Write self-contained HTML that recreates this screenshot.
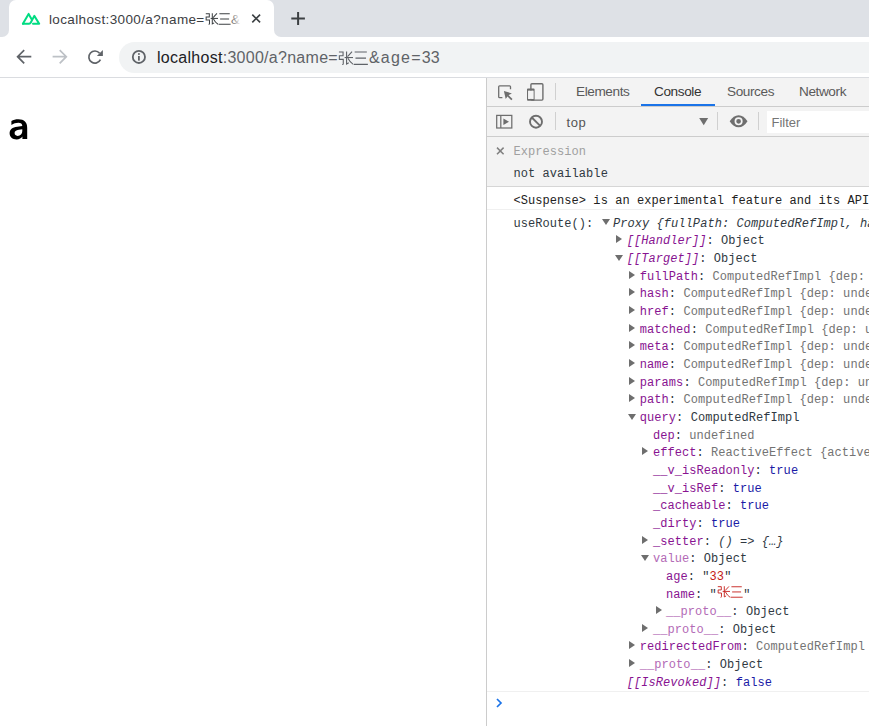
<!DOCTYPE html>
<html><head><meta charset="utf-8">
<style>
*{margin:0;padding:0;box-sizing:border-box}
html,body{width:869px;height:726px;overflow:hidden;background:#fff;position:relative;font-family:"Liberation Sans",sans-serif}
.abs{position:absolute}
#strip{left:0;top:0;width:869px;height:37px;background:#dee1e6}
#tab{left:9px;top:0;width:265px;height:37px;background:#fff;border-radius:7px 7px 0 0}
#flareL{left:0;top:0;width:9px;height:37px;background:#dee1e6;border-bottom-right-radius:7px}
#flareLbg{left:0;top:28px;width:9px;height:9px;background:#fff}
#flareR{left:274px;top:0;width:595px;height:37px;background:#dee1e6;border-bottom-left-radius:7px}
#flareRbg{left:274px;top:28px;width:9px;height:9px;background:#fff}
#tabtitle{left:49px;top:12px;font-size:13.5px;letter-spacing:0.37px;color:#3c4043;white-space:nowrap;width:192px;overflow:hidden}
#tabfade{left:229px;top:8px;width:13px;height:22px;background:linear-gradient(to right,rgba(255,255,255,0),#fff 90%)}
#toolbar{left:0;top:37px;width:869px;height:40px;background:#fff}
#omni{left:119px;top:42px;width:780px;height:31px;background:#f1f3f4;border-radius:15.5px}
#tline{left:0;top:77px;width:869px;height:1px;background:#dadce0}
#url{left:157px;top:49px;font-size:16px;letter-spacing:0.28px;color:#5f6368;white-space:nowrap}
#url b{font-weight:normal;color:#202124}
#dt{left:486px;top:78px;width:383px;height:648px;background:#fff;border-left:1px solid #cccccc}
#dtbar1{left:487px;top:78px;width:382px;height:29px;background:#f3f3f3;border-bottom:1px solid #cccccc}
#dtbar2{left:487px;top:107px;width:382px;height:30px;background:#f3f3f3;border-bottom:1px solid #cccccc}
.tabt{top:83.5px;font-size:13.6px;letter-spacing:-0.4px;color:#5a5a5a;white-space:nowrap}
.sep{width:1px;background:#d0d0d0}
#filter{left:767px;top:111px;width:103px;height:22px;background:#fff}
#expr{left:487px;top:137px;width:382px;height:50px;background:#f3f3f3;border-bottom:1px solid #d6d6d6}
.mono{font-family:"Liberation Mono",monospace;font-size:12px;letter-spacing:0.06px;white-space:nowrap;color:#303942}
.row{position:absolute;height:17.6px;line-height:17.6px}
.p{color:#881391}
.pl{color:#b36ab6}
.g{color:#737373}
.k{color:#1a1aa6}
.s{color:#c41a16}
.i{font-style:italic}
.tri{position:absolute;width:0;height:0}
.tr{border-left:6.5px solid #6e6e6e;border-top:4px solid transparent;border-bottom:4px solid transparent}
.td{border-top:6px solid #6e6e6e;border-left:4.3px solid transparent;border-right:4.3px solid transparent}
</style></head><body>
<div class="abs" id="strip"></div>
<div class="abs" id="flareLbg"></div>
<div class="abs" id="flareRbg"></div>
<div class="abs" id="tab"></div>
<div class="abs" id="flareL"></div>
<div class="abs" id="flareR"></div>

<div class="abs" id="toolbar"></div>
<div class="abs" id="omni"></div>
<div class="abs" id="tline"></div>
<div class="abs" id="url"><b>localhost</b>:3000/a?name=<svg width="15.5" height="15.5" viewBox="0 0 15 15" style="display:inline-block;vertical-align:2px;margin:-4px 0" fill="none" stroke="#5f6368" stroke-width="1.05" stroke-linecap="butt" stroke-linejoin="miter"><path d="M0.9 1.9H4.9V5.6H1.3V9.1H5.1V13.3Q5.1 14.1 4.1 14.0"/><path d="M8.3 1.4V13.6L10.4 12.4"/><path d="M13.6 1.6L9.2 6.4"/><path d="M6.4 7.3H14.8"/><path d="M9.6 7.9Q11.6 11.8 14.8 13.9"/></svg><svg width="15.5" height="15.5" viewBox="0 0 15 15" style="display:inline-block;vertical-align:2px;margin:-4px 0" fill="none" stroke="#5f6368" stroke-width="1.05"><path d="M1.6 2.0H13.4M2.4 7.9H12.6M0.6 13.9H14.4"/></svg><span style="letter-spacing:1.2px">&amp;age=</span>33</div>
<div class="abs" id="tabtitle">localhost:3000/a?name=<svg width="13.2" height="13.2" viewBox="0 0 15 15" style="display:inline-block;vertical-align:2.5px;margin:-4px 0" fill="none" stroke="#3c4043" stroke-width="1.15" stroke-linecap="butt" stroke-linejoin="miter"><path d="M0.9 1.9H4.9V5.6H1.3V9.1H5.1V13.3Q5.1 14.1 4.1 14.0"/><path d="M8.3 1.4V13.6L10.4 12.4"/><path d="M13.6 1.6L9.2 6.4"/><path d="M6.4 7.3H14.8"/><path d="M9.6 7.9Q11.6 11.8 14.8 13.9"/></svg><svg width="13.2" height="13.2" viewBox="0 0 15 15" style="display:inline-block;vertical-align:2.5px;margin:-4px 0" fill="none" stroke="#3c4043" stroke-width="1.15"><path d="M1.6 2.0H13.4M2.4 7.9H12.6M0.6 13.9H14.4"/></svg>&amp;age=33</div>
<div class="abs" id="tabfade"></div>


<svg class="abs" style="left:0;top:0" width="869" height="140" viewBox="0 0 869 140">
 <g fill="none" stroke="#00dc82" stroke-width="2" stroke-linejoin="round" stroke-linecap="round">
  <path d="M22.9 23.7L28.6 13.9L31.5 19.0"/>
  <path d="M22.9 23.7H29.1Q30.2 23.7 30.8 22.6L34.3 15.9L39.2 23.7H33"/>
 </g>
 <g stroke="#3c4043" stroke-width="1.6" fill="none">
  <path d="M252.3 14.6L260.1 22.4M260.1 14.6L252.3 22.4"/>
 </g>
 <g stroke="#3c4043" stroke-width="2" fill="none">
  <path d="M291.3 18.5H304.9M298.1 12V25"/>
 </g>
 <g fill="none" stroke="#5f6368" stroke-width="1.7">
  <path d="M17.6 56.7H31.3M24.2 50.1L17.6 56.7L24.2 63.3"/>
 </g>
 <g fill="none" stroke="#bdc1c6" stroke-width="1.7">
  <path d="M52.6 56.7H66.3M59.7 50.1L66.3 56.7L59.7 63.3"/>
 </g>
 <g fill="none" stroke="#5f6368" stroke-width="1.7">
  <path d="M99.6 53.2A6.05 6.05 0 1 0 100.4 59.6"/>
 </g>
 <path d="M102.9 49.9V55.9H96.9Z" fill="#5f6368"/>
 <circle cx="138.9" cy="56.9" r="6.1" fill="none" stroke="#5f6368" stroke-width="1.8"/>
 <rect x="138" y="53.2" width="1.8" height="1.6" fill="#5f6368"/>
 <rect x="138" y="56" width="1.8" height="4.6" fill="#5f6368"/>
</svg>

<svg class="abs" style="left:0;top:110px" width="40" height="40" viewBox="0 110 40 40"><path fill="#000" fill-rule="evenodd" d="M11.4 121.0C13.3 119.9 15.6 119.3 18.4 119.3C24.3 119.3 27.2 122.2 27.2 127.9V139.1H22.4V136.6C21.2 138.5 19.3 139.4 16.6 139.4C12.4 139.4 9.6 137.0 9.6 133.3C9.6 129.4 12.3 127.3 17.3 126.7L22.3 126.1C22.2 123.9 20.9 122.8 18.3 122.8C15.9 122.8 13.6 123.5 11.4 125.0ZM22.3 129.2L18.8 129.7C15.8 130.1 14.6 131.2 14.6 133.1C14.6 134.9 15.8 135.9 17.6 135.9C20.4 135.9 22.3 134.0 22.3 131.1Z"/></svg>

<div class="abs" id="dt"></div>
<div class="abs" id="dtbar1"></div>
<div class="abs" id="dtbar2"></div>
<div class="abs tabt" style="left:576px">Elements</div>
<div class="abs tabt" style="left:654px;color:#333">Console</div>
<div class="abs" style="left:641px;top:104px;width:74px;height:2px;background:#1a73e8"></div>
<div class="abs tabt" style="left:727px">Sources</div>
<div class="abs tabt" style="left:799px">Network</div>
<div class="abs sep" style="left:555px;top:83px;height:17px"></div>
<div class="abs sep" style="left:555px;top:112px;height:18px"></div>
<div class="abs" style="left:566.5px;top:115px;font-size:13px;letter-spacing:0.6px;color:#555">top</div>
<div class="abs sep" style="left:717px;top:112px;height:18px"></div>
<div class="abs sep" style="left:758px;top:112px;height:18px"></div>
<div class="abs" id="filter"></div>
<div class="abs" style="left:771.5px;top:115px;font-size:13px;color:#757575">Filter</div>


<svg class="abs" style="left:480px;top:78px" width="389" height="62" viewBox="480 78 389 62">
 <g fill="none" stroke="#6e6e6e" stroke-width="1.3">
  <path d="M502.4 97.7H499.6Q498.7 97.7 498.7 96.8V86.7Q498.7 85.8 499.6 85.8H509.6Q510.5 85.8 510.5 86.7V89.3"/>
  <path d="M507.6 95.4L511.9 99.6" stroke-width="1.7"/>
 </g>
 <path d="M503.9 90.9L511.9 93.4L508.3 95.3L505.7 99.1Z" fill="#6e6e6e"/>
 <g fill="none" stroke="#6e6e6e" stroke-width="1.4">
  <rect x="530.9" y="83.7" width="12" height="16.4" rx="1"/>
 </g>
 <path fill="#6e6e6e" fill-rule="evenodd" d="M527.9 88.4H533.7Q534.6 88.4 534.6 89.3V99.8Q534.6 100.7 533.7 100.7H527.9Q527 100.7 527 99.8V89.3Q527 88.4 527.9 88.4ZM528.2 90.8V98.9H533.4V90.8Z"/><rect x="528.2" y="90.8" width="5.2" height="8.1" fill="#f3f3f3"/>
 <g fill="none" stroke="#6e6e6e" stroke-width="1.25">
  <rect x="496.7" y="115.4" width="15.1" height="12.6"/>
  <path d="M500.8 115.4V128"/>
 </g>
 <path d="M503.4 118.5L509 121.7L503.4 124.9Z" fill="#6e6e6e"/>
 <g fill="none" stroke="#6e6e6e" stroke-width="1.9">
  <circle cx="536" cy="121.7" r="6"/>
  <path d="M531.8 117.5L540.2 125.9"/>
 </g>
 <path d="M699.2 118.1H708.2L703.7 125.3Z" fill="#6e6e6e"/>
 <path d="M729.7 121.3Q733.5 115.3 738.6 115.3Q743.7 115.3 747.5 121.3Q743.7 127.3 738.6 127.3Q733.5 127.3 729.7 121.3Z" fill="#6e6e6e"/>
 <circle cx="738.6" cy="121.3" r="3.2" fill="none" stroke="#f3f3f3" stroke-width="1.7"/>
</svg>

<div class="abs" id="expr"></div>
<svg class="abs" style="left:490px;top:140px" width="20" height="20" viewBox="490 140 20 20"><path d="M497 147.6L503.6 154.2M503.6 147.6L497 154.2" stroke="#808080" stroke-width="1.5" fill="none"/></svg>
<div class="row mono" style="left:513.5px;top:144px;color:#a0a0a0">Expression</div>
<div class="row mono" style="left:513.5px;top:166px">not available</div>
<div class="row mono" style="left:513.5px;top:193px;color:#222">&lt;Suspense&gt; is an experimental feature and its API will likely change.</div>
<div class="abs" style="left:487px;top:209px;width:382px;height:1px;background:#f0f0f0"></div>
<div class="row mono" style="left:513.5px;top:216px">useRoute(): </div>
<div class="tri td" style="left:602.2px;top:219.4px"></div>
<div class="row mono i" style="left:613px;top:216px">Proxy {fullPath: ComputedRefImpl, hash: ComputedRefImpl</div>
<div class="tri tr" style="left:616.0px;top:235.2px"></div><div class="row mono" style="left:626.7px;top:233.0px"><span class="p i">[[Handler]]</span>: Object</div>
<div class="tri td" style="left:615.1px;top:255.2px"></div><div class="row mono" style="left:626.7px;top:251.0px"><span class="p i">[[Target]]</span>: Object</div>
<div class="tri tr" style="left:629.1px;top:271.2px"></div><div class="row mono" style="left:639.8px;top:269.0px"><span class="p">fullPath</span>: <span class="g">ComputedRefImpl {dep: undefined, __v_isRef: true</span></div>
<div class="tri tr" style="left:629.1px;top:288.2px"></div><div class="row mono" style="left:639.8px;top:286.0px"><span class="p">hash</span>: <span class="g">ComputedRefImpl {dep: undefined, __v_isRef: true</span></div>
<div class="tri tr" style="left:629.1px;top:306.2px"></div><div class="row mono" style="left:639.8px;top:304.0px"><span class="p">href</span>: <span class="g">ComputedRefImpl {dep: undefined, __v_isRef: true</span></div>
<div class="tri tr" style="left:629.1px;top:324.2px"></div><div class="row mono" style="left:639.8px;top:322.0px"><span class="p">matched</span>: <span class="g">ComputedRefImpl {dep: undefined, __v_isRef: true</span></div>
<div class="tri tr" style="left:629.1px;top:341.2px"></div><div class="row mono" style="left:639.8px;top:339.0px"><span class="p">meta</span>: <span class="g">ComputedRefImpl {dep: undefined, __v_isRef: true</span></div>
<div class="tri tr" style="left:629.1px;top:359.2px"></div><div class="row mono" style="left:639.8px;top:357.0px"><span class="p">name</span>: <span class="g">ComputedRefImpl {dep: undefined, __v_isRef: true</span></div>
<div class="tri tr" style="left:629.1px;top:377.2px"></div><div class="row mono" style="left:639.8px;top:375.0px"><span class="p">params</span>: <span class="g">ComputedRefImpl {dep: undefined, __v_isRef: true</span></div>
<div class="tri tr" style="left:629.1px;top:394.2px"></div><div class="row mono" style="left:639.8px;top:392.0px"><span class="p">path</span>: <span class="g">ComputedRefImpl {dep: undefined, __v_isRef: true</span></div>
<div class="tri td" style="left:628.2px;top:414.2px"></div><div class="row mono" style="left:639.8px;top:410.0px"><span class="p">query</span>: ComputedRefImpl</div>
<div class="row mono" style="left:652.9px;top:428.0px"><span class="p">dep</span>: <span class="g">undefined</span></div>
<div class="tri tr" style="left:642.2px;top:447.2px"></div><div class="row mono" style="left:652.9px;top:445.0px"><span class="p">effect</span>: <span class="g">ReactiveEffect {active: true</span></div>
<div class="row mono" style="left:652.9px;top:463.0px"><span class="p">__v_isReadonly</span>: <span class="k">true</span></div>
<div class="row mono" style="left:652.9px;top:481.0px"><span class="p">__v_isRef</span>: <span class="k">true</span></div>
<div class="row mono" style="left:652.9px;top:498.0px"><span class="p">_cacheable</span>: <span class="k">true</span></div>
<div class="row mono" style="left:652.9px;top:516.0px"><span class="p">_dirty</span>: <span class="k">true</span></div>
<div class="tri tr" style="left:642.2px;top:536.2px"></div><div class="row mono" style="left:652.9px;top:534.0px"><span class="p">_setter</span>: <span class="i">() =&gt; {…}</span></div>
<div class="tri td" style="left:641.3px;top:555.2px"></div><div class="row mono" style="left:652.9px;top:551.0px"><span class="pl">value</span>: Object</div>
<div class="row mono" style="left:666.0px;top:569.0px"><span class="p">age</span>: "<span class="s">33</span>"</div>
<div class="row mono" style="left:666.0px;top:587.0px"><span class="p">name</span>: "<span class="s"><svg width="13.2" height="13.2" viewBox="0 0 15 15" style="display:inline-block;vertical-align:3.5px;margin:-4px 0" fill="none" stroke="#c41a16" stroke-width="1.0" stroke-linecap="butt" stroke-linejoin="miter"><path d="M0.9 1.9H4.9V5.6H1.3V9.1H5.1V13.3Q5.1 14.1 4.1 14.0"/><path d="M8.3 1.4V13.6L10.4 12.4"/><path d="M13.6 1.6L9.2 6.4"/><path d="M6.4 7.3H14.8"/><path d="M9.6 7.9Q11.6 11.8 14.8 13.9"/></svg><svg width="13.2" height="13.2" viewBox="0 0 15 15" style="display:inline-block;vertical-align:3.5px;margin:-4px 0" fill="none" stroke="#c41a16" stroke-width="1.0"><path d="M1.6 2.0H13.4M2.4 7.9H12.6M0.6 13.9H14.4"/></svg></span>"</div>
<div class="tri tr" style="left:656.0px;top:606.2px"></div><div class="row mono" style="left:666.0px;top:604.0px"><span class="pl">__proto__</span>: Object</div>
<div class="tri tr" style="left:642.2px;top:624.2px"></div><div class="row mono" style="left:652.9px;top:622.0px"><span class="pl">__proto__</span>: Object</div>
<div class="tri tr" style="left:629.1px;top:641.2px"></div><div class="row mono" style="left:639.8px;top:639.0px"><span class="p">redirectedFrom</span>: <span class="g">ComputedRefImpl</span></div>
<div class="tri tr" style="left:629.1px;top:659.2px"></div><div class="row mono" style="left:639.8px;top:657.0px"><span class="pl">__proto__</span>: Object</div>
<div class="row mono" style="left:626.7px;top:675.0px"><span class="p i">[[IsRevoked]]</span>: <span class="k">false</span></div>
<svg class="abs" style="left:490px;top:695px" width="20" height="16" viewBox="490 695 20 16"><path d="M497 699L501 703L497 707" fill="none" stroke="#1a73e8" stroke-width="1.7"/></svg>
<div class="abs" style="left:487px;top:691px;width:382px;height:1px;background:#f0f0f0"></div>
</body></html>
